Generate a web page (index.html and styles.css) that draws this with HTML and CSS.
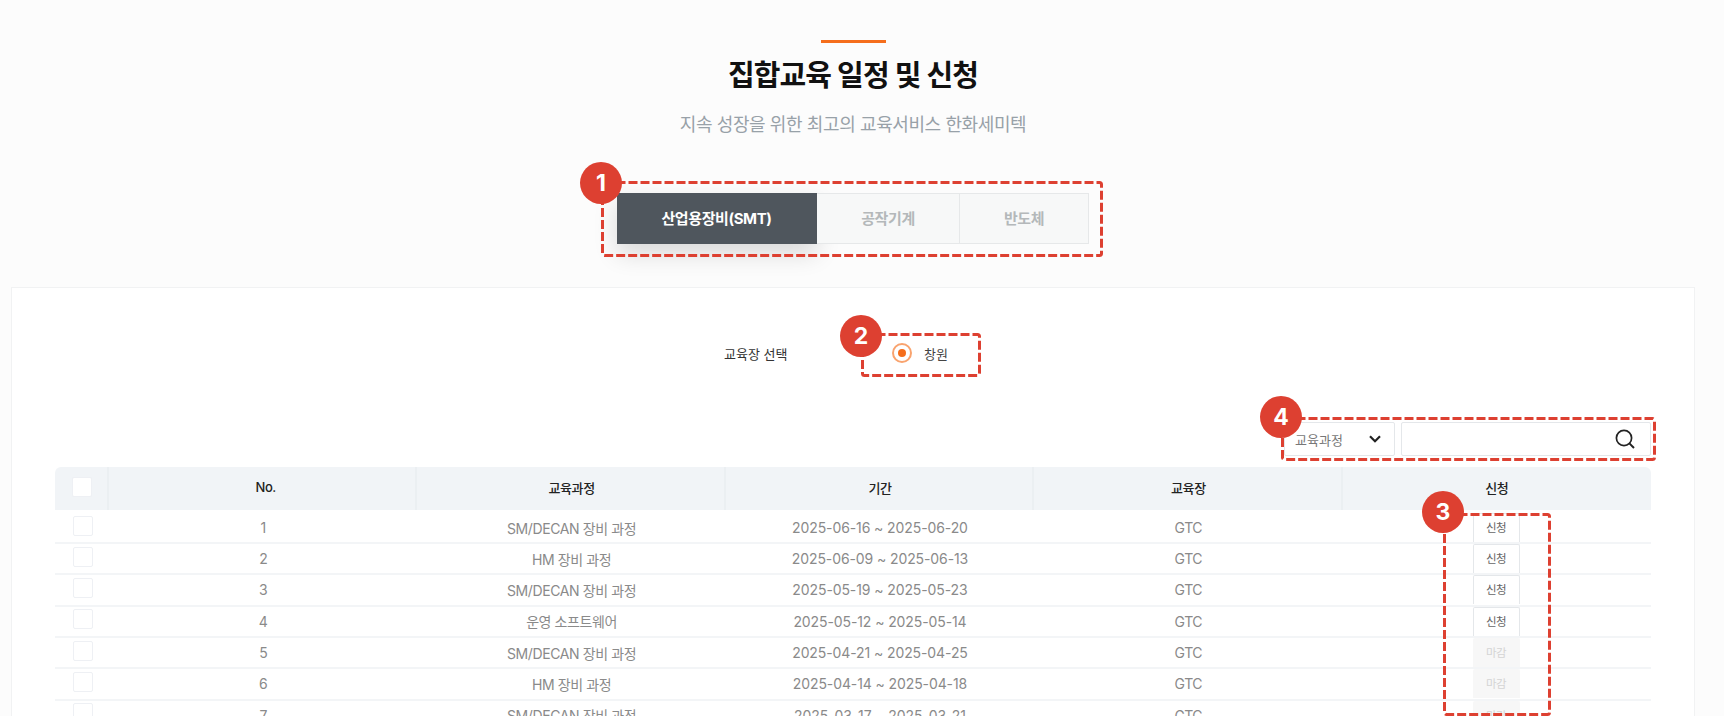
FILE: index.html
```html
<html>
    <head>
        <meta charset="utf-8">
        <link rel="stylesheet" href="styles.css">
    </head>
    <body>
        <div class="page">
            <div class="head">
                <span class="head-bar"></span>
                <h1>집합교육 일정 및 신청</h1>
                <p>지속 성장을 위한 최고의 교육서비스 한화세미텍</p>
            </div>

            <div class="tabs">
                <a class="tab tab-1 on">산업용장비(SMT)</a>
                <a class="tab tab-2">공작기계</a>
                <a class="tab tab-3">반도체</a>
            </div>

            <div class="card">
                <div class="place">
                    <span class="place-label">교육장 선택</span>
                    <span class="radio"><i></i></span>
                    <span class="place-name">창원</span>
                </div>

                <div class="search">
                    <div class="select">
                        <span>교육과정</span>
                        <svg width="14" height="10" viewBox="0 0 14 10"><path d="M2 2.2 7 7.2 12 2.2" fill="none" stroke="#222" stroke-width="2.2"/></svg>
                    </div>
                    <div class="query">
                        <svg width="22" height="22" viewBox="0 0 22 22"><circle cx="10" cy="10" r="7.6" fill="none" stroke="#222" stroke-width="1.7"/><path d="M15.4 15.4 20 20" stroke="#222" stroke-width="2"/></svg>
                    </div>
                </div>

                <table class="list">
                    <thead>
                        <tr>
                            <th class="check"><span class="box"></span></th>
                            <th class="no">No.</th>
                            <th>교육과정</th>
                            <th>기간</th>
                            <th>교육장</th>
                            <th>신청</th>
                        </tr>
                    </thead>
                    <tbody>
                        <tr><td class="check"><span class="box"></span></td><td>1</td><td>SM/DECAN 장비 과정</td><td class="date">2025-06-16 ~ 2025-06-20</td><td>GTC</td><td><a class="btn">신청</a></td></tr>
                        <tr><td class="check"><span class="box"></span></td><td>2</td><td>HM 장비 과정</td><td class="date">2025-06-09 ~ 2025-06-13</td><td>GTC</td><td><a class="btn">신청</a></td></tr>
                        <tr><td class="check"><span class="box"></span></td><td>3</td><td>SM/DECAN 장비 과정</td><td class="date">2025-05-19 ~ 2025-05-23</td><td>GTC</td><td><a class="btn">신청</a></td></tr>
                        <tr><td class="check"><span class="box"></span></td><td>4</td><td>운영 소프트웨어</td><td class="date">2025-05-12 ~ 2025-05-14</td><td>GTC</td><td><a class="btn">신청</a></td></tr>
                        <tr><td class="check"><span class="box"></span></td><td>5</td><td>SM/DECAN 장비 과정</td><td class="date">2025-04-21 ~ 2025-04-25</td><td>GTC</td><td><a class="btn off">마감</a></td></tr>
                        <tr><td class="check"><span class="box"></span></td><td>6</td><td>HM 장비 과정</td><td class="date">2025-04-14 ~ 2025-04-18</td><td>GTC</td><td><a class="btn off">마감</a></td></tr>
                        <tr><td class="check"><span class="box"></span></td><td>7</td><td>SM/DECAN 장비 과정</td><td class="date">2025-03-17 ~ 2025-03-21</td><td>GTC</td><td><a class="btn off">마감</a></td></tr>
                    </tbody>
                </table>
            </div>

            <!-- callouts drawn over the page -->
            <svg class="mark mark-1" width="502" height="76"><rect x="1.5" y="1.5" width="499" height="73" rx="2"/></svg>
            <svg class="mark mark-2" width="120" height="44"><rect x="1.5" y="1.5" width="117" height="41" rx="2"/></svg>
            <svg class="mark mark-3" width="108" height="203"><rect x="1.5" y="1.5" width="105" height="200" rx="2"/></svg>
            <svg class="mark mark-4" width="375" height="44"><rect x="1.5" y="1.5" width="372" height="41" rx="2"/></svg>
            <span class="num num-1">1</span>
            <span class="num num-2">2</span>
            <span class="num num-3">3</span>
            <span class="num num-4">4</span>
        </div>
    </body>
</html>
```

FILE: styles.css
```css
html, body {
    margin: 0;
    height: 716px;
    overflow: hidden;
}
body {
    background: #fcfcfc;
    color: #8a8a8a;
    font-family: Inter, "Noto Sans CJK KR", sans-serif;
    font-size: 13px;
}
.page {
    position: relative;
    height: 716px;
    overflow: hidden;
    padding-top: 40px;
    box-sizing: border-box;
}
.head {
    display: flex;
    flex-direction: column;
    align-items: center;
    padding-right: 18px;
}
.head-bar {
    background: #f56e1c;
    height: 3px;
    width: 65px;
}
.head h1 {
    color: #111;
    font-size: 29px;
    font-weight: 700;
    letter-spacing: -0.9px;
    line-height: 44px;
    margin: 11px 0 0;
}
.head p {
    color: #98a1a8;
    font-size: 18px;
    letter-spacing: -0.4px;
    line-height: 26px;
    margin: 14px 0 0;
}

.tabs {
    display: flex;
    justify-content: center;
    margin-top: 55px;
    padding-right: 18px;
}
.tab {
    background: #f7f8f8;
    border: 1px solid #e6e8e9;
    border-left: 0;
    box-sizing: border-box;
    color: #b4b8ba;
    font-size: 15px;
    font-weight: 700;
    height: 51px;
    letter-spacing: -0.4px;
    line-height: 49px;
    text-align: center;
}
.tab-1 { width: 200px; }
.tab-2 { width: 143px; }
.tab-3 { width: 129px; }
.tab.on {
    background: #4f565d;
    border-color: #4f565d;
    box-shadow: 0 10px 24px rgba(0, 0, 0, 0.14);
    color: #fff;
}

.card {
    background: #fff;
    border: 1px solid #f1f2f3;
    box-sizing: border-box;
    height: 520px;
    margin: 43px 29px 0 11px;
    padding: 0 43px;
}
.place {
    display: flex;
    align-items: center;
    color: #333;
    height: 30px;
    margin-top: 50px;
    padding-left: 669px;
}
.place-label {
    width: 168px;
}
.radio {
    border: 2px solid #f9a36e;
    border-radius: 50%;
    box-sizing: border-box;
    display: flex;
    align-items: center;
    justify-content: center;
    height: 20px;
    width: 20px;
}
.radio i {
    background: #f56e1c;
    border-radius: 50%;
    height: 8px;
    width: 8px;
}
.place-name {
    color: #444;
    margin-left: 12px;
}

.search {
    display: flex;
    justify-content: flex-end;
    gap: 6px;
    margin-top: 54px;
}
.select, .query {
    border: 1px solid #e4e7ea;
    border-radius: 2px;
    box-sizing: border-box;
    display: flex;
    align-items: center;
    justify-content: space-between;
    height: 34px;
}
.select {
    color: #777;
    font-size: 13px;
    padding: 0 12px 0 10px;
    width: 111px;
}
.query {
    justify-content: flex-end;
    padding-right: 14px;
    width: 250px;
}

.list {
    border-collapse: separate;
    border-spacing: 0;
    font-size: 14px;
    letter-spacing: -0.4px;
    margin-top: 11px;
    table-layout: fixed;
    width: 1596px;
}
.list th {
    background: #f1f4f7;
    box-shadow: inset -2px 0 0 #ebeff2;
    color: #222;
    font-size: 13px;
    font-weight: 500;
    height: 43px;
    padding: 0 0 3px;
}
.list th.no {
    padding-left: 5px;
}
.list th:first-child {
    border-top-left-radius: 6px;
}
.list th:last-child {
    border-top-right-radius: 6px;
    box-shadow: none;
}
.list td {
    border-bottom: 2px solid #f3f5f7;
    box-sizing: border-box;
    height: 31.33px;
    padding: 0;
    text-align: center;
}
.list td.date {
    letter-spacing: -0.1px;
}
.list tbody tr:first-child td {
    height: 34px;
    padding-top: 3px;
}
.check {
    width: 54px;
}
.box {
    background: #fff;
    border: 1px solid #eef0f4;
    border-radius: 2px;
    box-sizing: border-box;
    display: block;
    height: 20px;
    margin: 0 0 0 17px;
    width: 20px;
}
.list td .box {
    margin: 0 0 4px 18px;
}
.btn {
    background: #fff;
    border: 1px solid #e4e7ea;
    border-bottom: 0;
    border-radius: 2px 2px 0 0;
    box-sizing: border-box;
    color: #666;
    display: block;
    font-size: 11.5px;
    height: 29px;
    letter-spacing: -0.6px;
    line-height: 28px;
    margin: 0 0 0 130px;
    width: 47px;
}
.btn.off {
    background: #f7f7f7;
    border-color: #f7f7f7;
    color: #d4d4d4;
}

.mark {
    fill: none;
    position: absolute;
    stroke: #dd4031;
    stroke-dasharray: 9 3;
    stroke-width: 3;
}
.mark-1 { left: 601px; top: 181px; }
.mark-2 { left: 861px; top: 333px; }
.mark-3 { left: 1443px; top: 513px; }
.mark-4 { left: 1281px; top: 417px; }
.num {
    background: #dd4031;
    border-radius: 50%;
    color: #fff;
    font-size: 23px;
    font-weight: 700;
    height: 42px;
    line-height: 42px;
    position: absolute;
    text-align: center;
    width: 42px;
}
.num-1 { left: 580px; top: 162px; }
.num-2 { left: 840px; top: 315px; }
.num-3 { left: 1422px; top: 491px; }
.num-4 { left: 1260px; top: 396px; }
```
